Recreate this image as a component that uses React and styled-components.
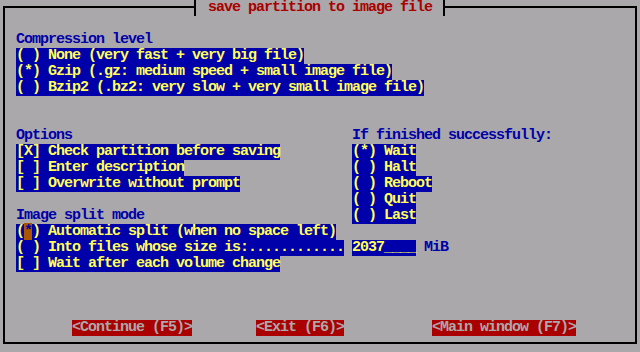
import React from "react";
import styled, { createGlobalStyle } from "styled-components";

const C = {
  grey: "#aaa8aa",
  blue: "#0000aa",
  yellow: "#ffff55",
  red: "#aa0000",
  brown: "#aa5500",
  black: "#000000",
};

const Global = createGlobalStyle`
  html, body { margin: 0; padding: 0; background: ${C.grey}; }
  body {
    font-family: "Liberation Mono", "DejaVu Sans Mono", monospace;
    font-size: 15px;
    letter-spacing: -1px;
    font-weight: bold;
    line-height: 16px;
  }
`;

const Screen = styled.div`
  width: 640px;
  height: 352px;
  background: ${C.grey};
  overflow: hidden;
  padding-top: 6px;
  padding-left: 3px;
  box-sizing: border-box;
`;

const Frame = styled.div`
  position: relative;
  box-sizing: border-box;
  width: 634px;
  height: 338px;
  border: 2px solid ${C.black};
  padding: 24px 0 0 11px;
  display: flex;
  flex-direction: column;
`;

const Title = styled.div`
  position: absolute;
  top: -8px;
  left: 189px;
  height: 16px;
  padding: 0 11px 0 12px;
  background: ${C.grey};
  border-left: 2px solid ${C.black};
  border-right: 2px solid ${C.black};
  color: ${C.red};
  white-space: pre;
`;

const Group = styled.div`
  display: flex;
  flex-direction: column;
  align-items: flex-start;
  margin-top: ${(p) => p.$top || 0}px;
`;

const Label = styled.div`
  height: 16px;
  color: ${C.blue};
  white-space: pre;
`;

const Item = styled.div`
  height: 16px;
  width: max-content;
  background: ${C.blue};
  color: ${C.yellow};
  white-space: pre;
`;

const Cursor = styled.span`
  background: ${C.brown};
  color: ${C.blue};
`;

const Columns = styled.div`
  display: flex;
  margin-top: 32px;
`;

const LeftCol = styled.div`
  width: 336px;
  flex-shrink: 0;
  display: flex;
  flex-direction: column;
  align-items: flex-start;
`;

const RightCol = styled.div`
  display: flex;
  flex-direction: column;
  align-items: flex-start;
`;

const SplitRow = styled.div`
  display: flex;
  gap: 8px;
  width: max-content;
  height: 16px;
`;

const Unit = styled.span`
  color: ${C.blue};
  white-space: pre;
`;

const ButtonRow = styled.div`
  display: flex;
  margin-top: 48px;
`;

const Button = styled.div`
  height: 16px;
  margin-left: ${(p) => p.$gap}px;
  background: ${C.red};
  color: ${C.grey};
  white-space: pre;
`;

export default function App() {
  return (
    <>
      <Global />
      <Screen>
        <Frame>
          <Title>save partition to image file</Title>
          <Group>
            <Label>Compression level</Label>
            <Item>( ) None (very fast + very big file)</Item>
            <Item>(*) Gzip (.gz: medium speed + small image file)</Item>
            <Item>( ) Bzip2 (.bz2: very slow + very small image file)</Item>
          </Group>
          <Columns>
            <LeftCol>
              <Group>
                <Label>Options</Label>
                <Item>[X] Check partition before saving</Item>
                <Item>[ ] Enter description</Item>
                <Item>[ ] Overwrite without prompt</Item>
              </Group>
              <Group $top={16}>
                <Label>Image split mode</Label>
                <Item>
                  (<Cursor>*</Cursor>) Automatic split (when no space left)
                </Item>
                <SplitRow>
                  <Item>( ) Into files whose size is:............</Item>
                  <Item>2037____</Item>
                  <Unit>MiB</Unit>
                </SplitRow>
                <Item>[ ] Wait after each volume change</Item>
              </Group>
            </LeftCol>
            <RightCol>
              <Label>If finished successfully:</Label>
              <Item>(*) Wait</Item>
              <Item>( ) Halt</Item>
              <Item>( ) Reboot</Item>
              <Item>( ) Quit</Item>
              <Item>( ) Last</Item>
            </RightCol>
          </Columns>
          <ButtonRow>
            <Button $gap={56}>{"<Continue (F5)>"}</Button>
            <Button $gap={64}>{"<Exit (F6)>"}</Button>
            <Button $gap={88}>{"<Main window (F7)>"}</Button>
          </ButtonRow>
        </Frame>
      </Screen>
    </>
  );
}
